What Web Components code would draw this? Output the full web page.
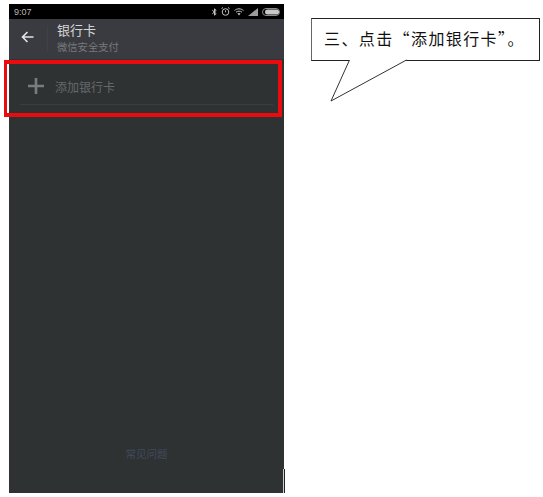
<!DOCTYPE html>
<html lang="zh">
<head>
<meta charset="utf-8">
<title>添加银行卡</title>
<style>
	html, body { margin: 0; height: 100%; background: #fff; overflow: hidden; }
	body { display: flex; align-items: flex-start; font-family: "Liberation Sans", "Noto Sans CJK SC", sans-serif; }
</style>
</head>
<body>
<phone-screen>
	<status-bar time="9:07"></status-bar>
	<wallet-header title="银行卡" subtitle="微信安全支付"></wallet-header>
	<add-card-row label="添加银行卡"></add-card-row>
	<span slot="footer">常见问题</span>
</phone-screen>
<speech-callout>三、点击“添加银行卡”。</speech-callout>
<script>
class PhoneScreen extends HTMLElement {
	constructor() {
		super();
		this.attachShadow({ mode: "open" });
		this.shadowRoot.innerHTML = `
			<style>
				:host {
					display: flex;
					flex-direction: column;
					position: relative;
					flex: none;
					width: 275px;
					height: 489px;
					margin: 4px 0 0 9px;
					background: #2e3233;
				}
				.content { flex: 1; }
				.footer {
					display: block;
					padding-bottom: 31px;
					text-align: center;
					font-size: 10.5px;
					line-height: 16px;
					color: #424a5c;
				}
				.mark {
					position: absolute;
					left: -5px;
					top: 56px;
					width: 271px;
					height: 49px;
					border: 4px solid #e90b0e;
					border-left-width: 3px;
				}
				.mark::before {
					content: "";
					position: absolute;
					left: 0;
					top: 0;
					bottom: 0;
					width: 2px;
					background: #fff;
				}
				.rule {
					position: absolute;
					right: -1px;
					bottom: 0;
					width: 1px;
					height: 24px;
					background: #222;
					border-left: 1px solid #cfcfcf;
				}
			</style>
			<div class="content"><slot></slot></div>
			<div class="footer"><slot name="footer"></slot></div>
			<div class="mark"></div>
			<div class="rule"></div>
		`;
	}
}

class StatusBar extends HTMLElement {
	constructor() {
		super();
		this.attachShadow({ mode: "open" });
		this.shadowRoot.innerHTML = `
			<style>
				:host {
					display: flex;
					align-items: center;
					justify-content: space-between;
					height: 15px;
					padding: 0 4px 0 5px;
					background: #000;
					color: #b9b9b9;
					font-size: 9px;
				}
				.icons { display: flex; align-items: center; gap: 4px; }
				svg { display: block; }
			</style>
			<span>${this.getAttribute("time")}</span>
			<div class="icons">
				<svg width="5" height="8" viewBox="0 0 5 8" fill="none" stroke="#c4c4c4" stroke-width="1"><path d="M0.3 2.2 4.2 5.6 2.5 7.2V0.8L4.2 2.4 0.3 5.8"/></svg>
				<svg width="9" height="9" viewBox="0 0 9 9" fill="none" stroke="#c4c4c4" stroke-width="1"><circle cx="4.5" cy="5" r="3.3"/><path d="M0.5 1.6 2 0.5M8.5 1.6 7 0.5M4.5 3.4V5.2"/></svg>
				<svg width="10" height="8" viewBox="0 0 10 8" fill="none" stroke="#c4c4c4" stroke-width="1"><path d="M0.5 2.6C3 0.2 7 0.2 9.5 2.6M2 4.2C3.7 2.8 6.3 2.8 8 4.2"/><path d="M3.4 5.4 5 7.4 6.6 5.4C5.6 4.7 4.4 4.7 3.4 5.4Z" fill="#c4c4c4" stroke="none"/></svg>
				<svg width="10" height="8" viewBox="0 0 10 8"><path d="M0 8 10 0V8Z" fill="#9c9c9c"/></svg>
				<svg width="18" height="8" viewBox="0 0 18 8"><rect x="0.5" y="0.5" width="17" height="7" rx="3.5" fill="none" stroke="#8a8a8a"/><rect x="3" y="1.5" width="14" height="5" rx="2.5" fill="#c8c8c8"/></svg>
			</div>
		`;
	}
}

class WalletHeader extends HTMLElement {
	constructor() {
		super();
		this.attachShadow({ mode: "open" });
		this.shadowRoot.innerHTML = `
			<style>
				:host {
					display: flex;
					align-items: center;
					height: 40px;
					background: #3a3b40;
				}
				.back { flex: none; width: 38px; display: flex; justify-content: center; padding: 0 2px 4px 0; box-sizing: border-box; }
				.sep { flex: none; width: 1px; height: 26px; margin-right: 9px; background: #404146; }
				.title { color: #d6d6d6; font-size: 13px; line-height: 16px; }
				.sub { color: #77797c; font-size: 10.3px; line-height: 14px; margin-top: 2px; }
				svg { display: block; }
			</style>
			<div class="back">
				<svg width="13" height="12" viewBox="0 0 13 12" fill="none" stroke="#e4e4e4" stroke-width="1.6"><path d="M12.5 6H1.5M6.5 1 1.5 6 6.5 11"/></svg>
			</div>
			<div class="sep"></div>
			<div>
				<div class="title">${this.getAttribute("title")}</div>
				<div class="sub">${this.getAttribute("subtitle")}</div>
			</div>
		`;
	}
}

class AddCardRow extends HTMLElement {
	constructor() {
		super();
		this.attachShadow({ mode: "open" });
		this.shadowRoot.innerHTML = `
			<style>
				:host {
					display: block;
					padding: 0 11px 0 11px;
				}
				.row {
					display: flex;
					align-items: center;
					gap: 11px;
					height: 36px;
					padding: 9px 0 0 8px;
					border-bottom: 1px solid #3a3e3f;
					color: #66696a;
					font-size: 12px;
				}
				svg { display: block; flex: none; }
			</style>
			<div class="row">
				<svg width="16" height="16" viewBox="0 0 16 16"><path d="M6.7 0h2.6v6.7H16v2.6H9.3V16H6.7V9.3H0V6.7h6.7Z" fill="#7a7c7d"/></svg>
				<span>${this.getAttribute("label")}</span>
			</div>
		`;
	}
}

class SpeechCallout extends HTMLElement {
	constructor() {
		super();
		this.attachShadow({ mode: "open" });
		this.shadowRoot.innerHTML = `
			<style>
				:host {
					display: block;
					position: relative;
					flex: none;
					width: 229px;
					height: 43px;
					margin: 18px 0 0 27px;
					box-sizing: border-box;
					border: 1px solid #222;
					border-left-color: #666;
					background: #fff;
					color: #111;
					font-family: "Noto Sans CJK SC", sans-serif;
					font-size: 16px;
					letter-spacing: 1.4px;
					line-height: 38px;
					padding-left: 12px;
					white-space: nowrap;
				}
				svg { position: absolute; left: 17px; top: 41px; overflow: visible; }
			</style>
			<slot></slot>
			<svg width="78" height="42" viewBox="0 0 78 42"><path d="M20.5 0 2 41 77.5 0" fill="#fff" stroke="#333" stroke-width="1"/></svg>
		`;
	}
}

customElements.define("phone-screen", PhoneScreen);
customElements.define("status-bar", StatusBar);
customElements.define("wallet-header", WalletHeader);
customElements.define("add-card-row", AddCardRow);
customElements.define("speech-callout", SpeechCallout);
</script>
</body>
</html>
